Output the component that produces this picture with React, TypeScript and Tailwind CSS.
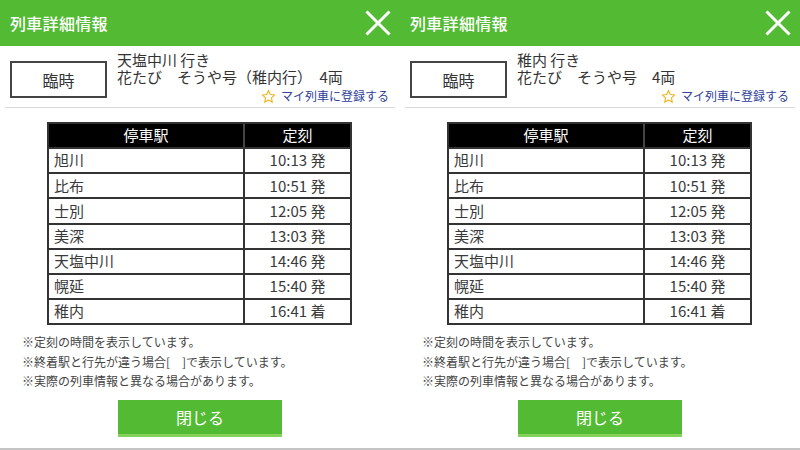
import React from "react";

type Stop = { name: string; time: string; kind: string };

const stops: Stop[] = [
  { name: "旭川", time: "10:13", kind: "発" },
  { name: "比布", time: "10:51", kind: "発" },
  { name: "士別", time: "12:05", kind: "発" },
  { name: "美深", time: "13:03", kind: "発" },
  { name: "天塩中川", time: "14:46", kind: "発" },
  { name: "幌延", time: "15:40", kind: "発" },
  { name: "稚内", time: "16:41", kind: "着" },
];

function CloseIcon() {
  return (
    <svg width="28" height="28" viewBox="0 0 28 28" fill="none">
      <path d="M2.5 2.5 L25.5 25.5 M25.5 2.5 L2.5 25.5" stroke="white" strokeWidth="3" strokeLinecap="butt" />
    </svg>
  );
}

function Star() {
  return (
    <svg width="15" height="15" viewBox="0 0 24 24" fill="none">
      <path
        d="M12 2.2 L14.9 8.9 L22 9.5 L16.6 14.2 L18.2 21.3 L12 17.6 L5.8 21.3 L7.4 14.2 L2 9.5 L9.1 8.9 Z"
        stroke="#f2b21c"
        strokeWidth="1.8"
        strokeLinejoin="round"
        fill="white"
      />
    </svg>
  );
}

function Panel({ dest, line }: { dest: string; line: string }) {
  return (
    <div className="w-[400px] h-[450px] flex flex-col bg-white">
      <div className="h-[46px] bg-[#53ba34] flex items-center justify-between pl-[10px] pr-[8px]">
        <span className="text-white text-[16px] font-medium tracking-[0.3px]">列車詳細情報</span>
        <CloseIcon />
      </div>
      <div className="h-[62px] mx-[5px] border-b border-[#d8d8d8] flex">
        <div className="ml-[5px] mt-[15px] w-[97px] h-[37px] border-2 border-[#444] flex items-center justify-center text-[16px] text-[#333]">
          臨時
        </div>
        <div className="ml-[10px] flex-1 pt-[5px] pr-[6px]">
          <div className="text-[15px] leading-[17px] text-[#333] whitespace-pre">{dest}</div>
          <div className="text-[15px] leading-[17px] text-[#333] whitespace-pre">{line}</div>
          <div className="flex items-center justify-end gap-[5px] mt-[3px] h-[16px]">
            <Star />
            <span className="text-[12px] text-[#2f3f9c]">マイ列車に登録する</span>
          </div>
        </div>
      </div>
      <div className="ml-[47px] mt-[14px] w-[305px] border-2 border-[#333] text-[15px]">
        <div className="h-[23px] bg-black flex text-white">
          <div className="w-[196px] border-r-2 border-[#444] flex items-center justify-center">停車駅</div>
          <div className="flex-1 flex items-center justify-center">定刻</div>
        </div>
        {stops.map((s) => (
          <div key={s.name} className="h-[25.2px] border-t-2 border-[#333] flex text-[#3a3a3a]">
            <div className="w-[196px] border-r-2 border-[#333] flex items-center pl-[5px]">{s.name}</div>
            <div className="flex-1 flex items-center justify-center">
              {s.time} {s.kind}
            </div>
          </div>
        ))}
      </div>
      <div className="ml-[22px] mt-[7px] text-[12px] leading-[19.5px] text-[#444]">
        <div>※定刻の時間を表示しています。</div>
        <div>※終着駅と行先が違う場合[　]で表示しています。</div>
        <div>※実際の列車情報と異なる場合があります。</div>
      </div>
      <div className="mt-[9px] mx-auto w-[164px] h-[37px] bg-[#53ba34] border-b-[3px] border-[#86d05c] flex items-center justify-center text-white text-[16px]">
        閉じる
      </div>
      <div className="mt-auto h-[2px] bg-[#c4c4c4]" />
    </div>
  );
}

export default function App() {
  return (
    <div
      className="w-[800px] h-[450px] flex overflow-hidden bg-white"
      style={{ fontFamily: '"Noto Sans CJK JP", "Noto Sans", sans-serif' }}
    >
      <Panel dest="天塩中川 行き" line="花たび　そうや号（稚内行）　4両" />
      <Panel dest="稚内 行き" line="花たび　そうや号　4両" />
    </div>
  );
}
